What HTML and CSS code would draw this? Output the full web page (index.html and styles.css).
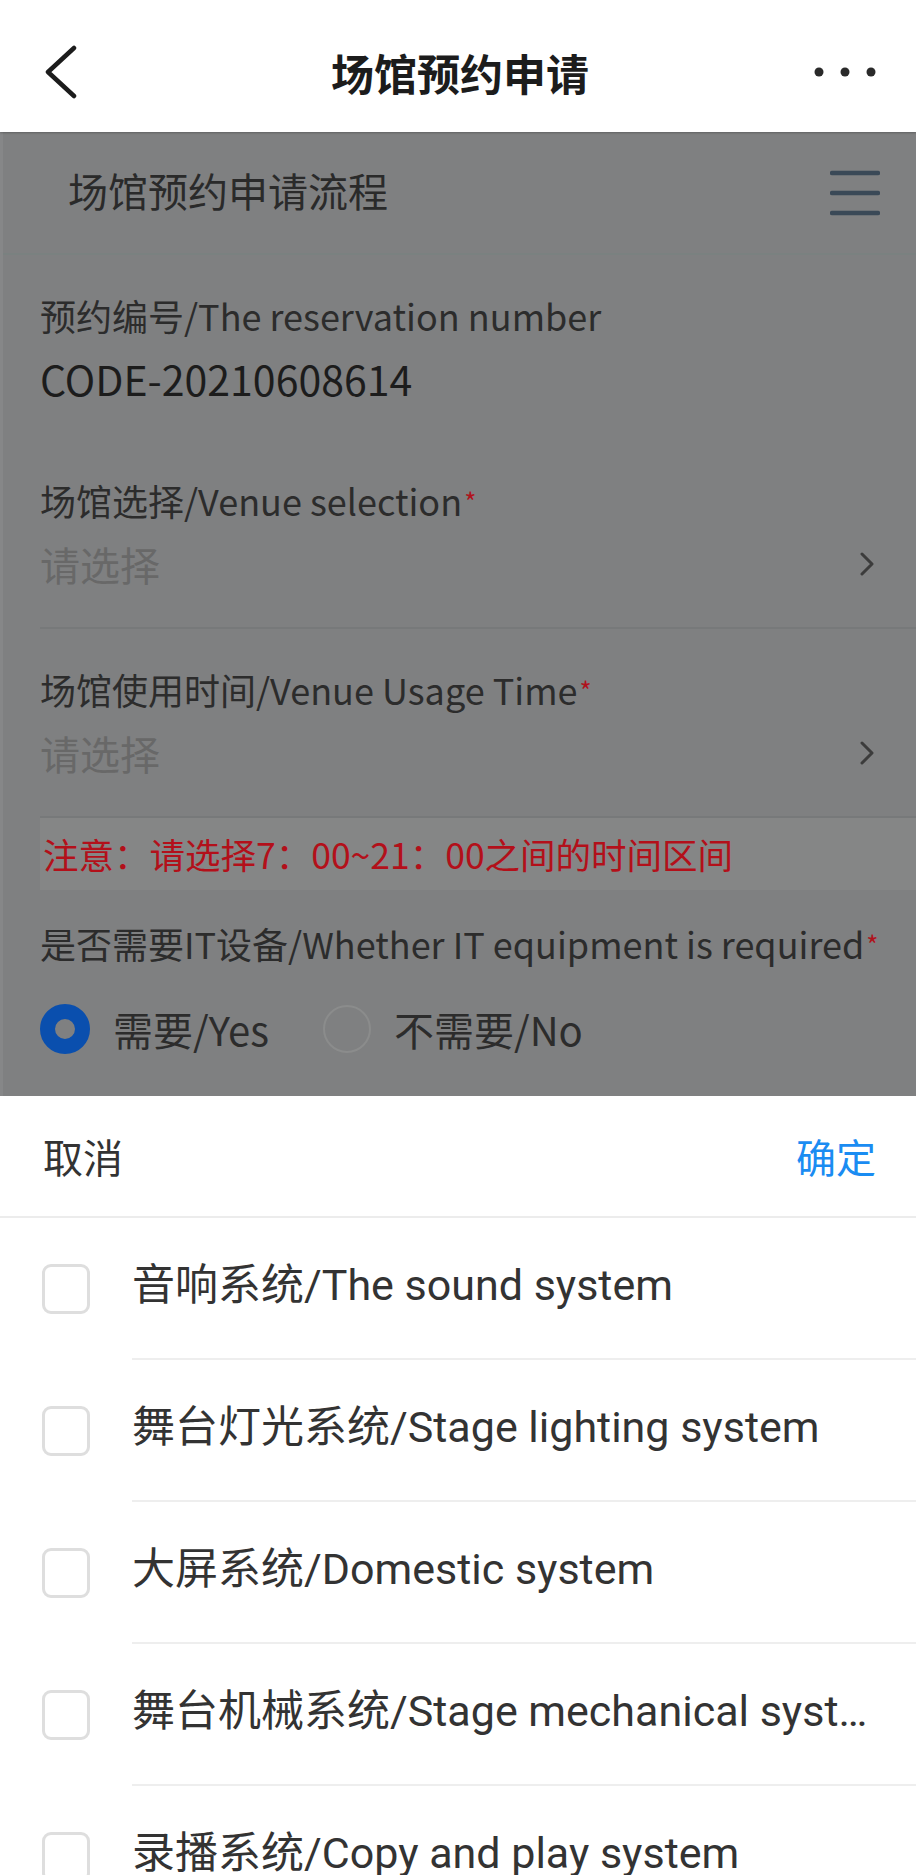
FILE: index.html
```html
<!DOCTYPE html>
<html lang="zh-CN">
<head>
    <meta charset="UTF-8">
    <meta name="viewport" content="width=device-width, initial-scale=1.0">
    <title>场馆预约申请</title>
    <link rel="stylesheet" href="styles.css">
</head>
<body>
    <!-- Top navigation bar -->
    <header class="nav-bar">
        <span class="nav-back">
            <svg width="34" height="54" viewBox="0 0 34 54"><polyline points="30,3 4,27 30,51" fill="none" stroke="#1c1c1c" stroke-width="4.5" stroke-linecap="round" stroke-linejoin="round"/></svg>
        </span>
        <h1 class="nav-title">场馆预约申请</h1>
        <span class="nav-more">
            <svg width="62" height="12" viewBox="0 0 62 12"><circle cx="5" cy="6" r="4.5" fill="#2a2a2a"/><circle cx="31" cy="6" r="4.5" fill="#2a2a2a"/><circle cx="57" cy="6" r="4.5" fill="#2a2a2a"/></svg>
        </span>
    </header>

    <!-- Reservation form, dimmed while the picker is open -->
    <main class="page dimmed">
        <div class="flow-bar">
            <span class="flow-title">场馆预约申请流程</span>
            <svg width="50" height="46" viewBox="0 0 50 46"><g stroke="#3a4957" stroke-width="4.5" stroke-linecap="round"><line x1="2" y1="3" x2="48" y2="3"/><line x1="2" y1="23" x2="48" y2="23"/><line x1="2" y1="43" x2="48" y2="43"/></g></svg>
        </div>

        <div class="field field-first">
            <div class="field-label">预约编号/The reservation number</div>
            <div class="field-value">CODE-20210608614</div>
        </div>

        <div class="field bordered">
            <div class="field-label">场馆选择/Venue selection<span class="required">*</span></div>
            <div class="field-select">
                <span>请选择</span>
                <svg width="16" height="24" viewBox="0 0 16 24"><polyline points="3,2 13,12 3,22" fill="none" stroke="#3c3c3c" stroke-width="3" stroke-linecap="round" stroke-linejoin="round"/></svg>
            </div>
        </div>

        <div class="field bordered">
            <div class="field-label">场馆使用时间/Venue Usage Time<span class="required">*</span></div>
            <div class="field-select">
                <span>请选择</span>
                <svg width="16" height="24" viewBox="0 0 16 24"><polyline points="3,2 13,12 3,22" fill="none" stroke="#3c3c3c" stroke-width="3" stroke-linecap="round" stroke-linejoin="round"/></svg>
            </div>
        </div>

        <div class="notice">注意：请选择7：00~21：00之间的时间区间</div>

        <div class="field field-radio">
            <div class="field-label">是否需要IT设备/Whether IT equipment is required<span class="required">*</span></div>
            <div class="radio-group">
                <span class="radio checked"></span>
                <span class="radio-text">需要/Yes</span>
                <span class="radio"></span>
                <span class="radio-text">不需要/No</span>
            </div>
        </div>
    </main>

    <!-- Equipment picker sheet -->
    <section class="sheet">
        <div class="sheet-toolbar">
            <span class="sheet-cancel">取消</span>
            <span class="sheet-confirm">确定</span>
        </div>
        <ul class="option-list">
            <li class="option"><span class="checkbox"></span><span class="option-text">音响系统/The sound system</span></li>
            <li class="option"><span class="checkbox"></span><span class="option-text">舞台灯光系统/Stage lighting system</span></li>
            <li class="option"><span class="checkbox"></span><span class="option-text">大屏系统/Domestic system</span></li>
            <li class="option"><span class="checkbox"></span><span class="option-text">舞台机械系统/Stage mechanical system</span></li>
            <li class="option"><span class="checkbox"></span><span class="option-text">录播系统/Copy and play system</span></li>
        </ul>
    </section>
</body>
</html>
```

FILE: styles.css
```css
/* Page frame: phone-like full window, nothing scrolls */
html, body {
    margin: 0;
    height: 1875px;
    overflow: hidden;
}

body {
    font-family: "Noto Sans CJK SC", "Noto Sans", sans-serif;
    background: #fff;
    color: #333;
}

/* Navigation bar */
.nav-bar {
    position: relative;
    z-index: 2;
    display: grid;
    grid-template-columns: 1fr auto 1fr;
    align-items: center;
    height: 132px;
    box-sizing: border-box;
    padding: 12px 40px 0 44px;
    background: #fff;
    box-shadow: 0 1px 2px rgba(0, 0, 0, 0.25);
}

.nav-back svg,
.nav-more svg {
    display: block;
}

.nav-more {
    justify-self: end;
}

.nav-title {
    margin: 0;
    font-size: 43px;
    font-weight: bold;
    color: #1c1c1c;
    line-height: 60px;
}

/* Dimmed form area behind the sheet */
.dimmed {
    background: #7f8081;
    border-left: 3px solid #868788;
    color: #2c2c2c;
}

.flow-bar {
    display: flex;
    justify-content: space-between;
    align-items: center;
    height: 121px;
    padding: 0 36px 0 65px;
    border-bottom: 2px solid #7a8180;
}

.flow-title {
    font-size: 40px;
    color: #2a2a2a;
    margin-bottom: 6px;
}

.flow-bar svg {
    display: block;
}

/* Form fields */
.field {
    margin-left: 37px;
    padding: 35px 41px 32px 0;
}

.field-first {
    padding-bottom: 34px;
}

.field.bordered {
    padding-bottom: 35px;
    border-bottom: 2px solid #77797a;
}

.field-label {
    font-size: 36px;
    line-height: 50px;
    color: #2c2c2c;
    white-space: nowrap;
}

.required {
    color: #b0121c;
    font-size: 26px;
    vertical-align: 4px;
    margin-left: 2px;
}

.field-value {
    margin-top: 10px;
    font-size: 41px;
    line-height: 56px;
    color: #1c1c1c;
}

.field-select {
    display: flex;
    justify-content: space-between;
    align-items: center;
    margin-top: 10px;
    height: 56px;
    font-size: 40px;
    color: #686868;
}

.field-select svg {
    display: block;
}

.notice {
    margin-left: 37px;
    height: 72px;
    line-height: 72px;
    padding-left: 3px;
    background: #858686;
    color: #b3101a;
    font-size: 35.5px;
    white-space: nowrap;
}

.field-radio {
    padding-top: 28px;
    padding-bottom: 39px;
}

.radio-group {
    display: flex;
    align-items: center;
    margin-top: 32px;
    height: 56px;
}

.radio {
    width: 48px;
    height: 48px;
    box-sizing: border-box;
    border-radius: 50%;
    border: 2px solid #8b8c8c;
    margin-left: 2px;
}

.radio.checked {
    width: 50px;
    height: 50px;
    border: 15px solid #0a4fae;
    margin-left: 0;
}

.radio-text {
    margin-left: 23px;
    margin-right: 52px;
    font-size: 40px;
    color: #2c2c2c;
}

/* Bottom picker sheet */
.sheet {
    background: #fff;
}

.sheet-toolbar {
    display: flex;
    justify-content: space-between;
    align-items: center;
    height: 120px;
    padding: 0 40px 0 43px;
    border-bottom: 2px solid #ececec;
    font-size: 40px;
}

.sheet-cancel {
    color: #333;
}

.sheet-confirm {
    color: #1a8cf2;
}

.option-list {
    list-style: none;
    margin: 0;
    padding: 0;
}

.option {
    display: flex;
    align-items: center;
    padding-left: 42px;
}

.checkbox {
    flex-shrink: 0;
    width: 48px;
    height: 50px;
    box-sizing: border-box;
    border: 3px solid #dedede;
    border-radius: 9px;
}

.option-text {
    flex: 1;
    min-width: 0;
    margin-left: 42px;
    padding-right: 44px;
    padding-bottom: 6px;
    height: 134px;
    line-height: 134px;
    border-bottom: 2px solid #eeeeee;
    font-family: Roboto, "Noto Sans CJK SC", sans-serif;
    font-size: 43px;
    color: #333;
    white-space: nowrap;
    overflow: hidden;
    text-overflow: ellipsis;
}
```
